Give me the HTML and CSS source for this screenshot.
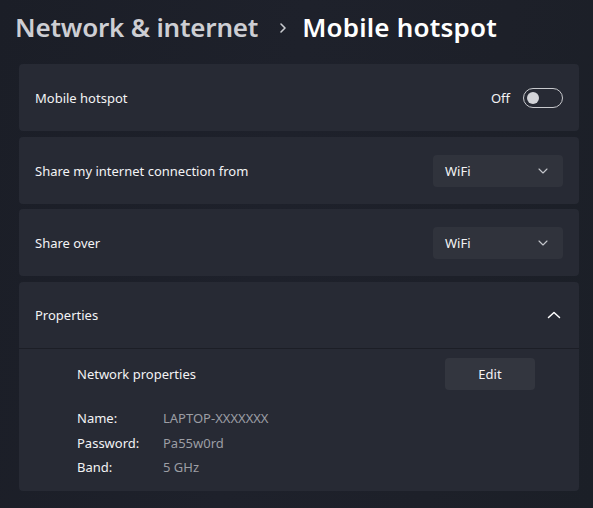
FILE: index.html
```html
<!DOCTYPE html>
<html lang="en">
<head>
<meta charset="utf-8">
<title>Mobile hotspot</title>
<link rel="stylesheet" href="styles.css">
</head>
<body>
<div class="page">
  <h1 class="title">
    <span class="crumb">Network &amp; internet</span>
    <svg class="crumb-sep" width="8" height="12" viewBox="0 0 8 12"><path d="M2 2 L6 6 L2 10" fill="none" stroke="#c9cbd0" stroke-width="1.6" stroke-linecap="round" stroke-linejoin="round"/></svg>
    <span class="current">Mobile hotspot</span>
  </h1>
  <div class="list">
    <div class="card row">
      <span class="label">Mobile hotspot</span>
      <div class="toggle-wrap">
        <span class="state">Off</span>
        <span class="toggle"><span class="knob"></span></span>
      </div>
    </div>
    <div class="card row">
      <span class="label">Share my internet connection from</span>
      <div class="select"><span>WiFi</span>
        <svg width="10" height="6" viewBox="0 0 10 6"><path d="M1 1 L5 5 L9 1" fill="none" stroke="#c4c6cb" stroke-width="1.1" stroke-linecap="round" stroke-linejoin="round"/></svg>
      </div>
    </div>
    <div class="card row">
      <span class="label">Share over</span>
      <div class="select"><span>WiFi</span>
        <svg width="10" height="6" viewBox="0 0 10 6"><path d="M1 1 L5 5 L9 1" fill="none" stroke="#c4c6cb" stroke-width="1.1" stroke-linecap="round" stroke-linejoin="round"/></svg>
      </div>
    </div>
    <div class="card expander">
      <div class="row header">
        <span class="label">Properties</span>
        <svg class="caret" width="14" height="8" viewBox="0 0 14 8"><path d="M1.5 6.5 L7 1.5 L12.5 6.5" fill="none" stroke="#ffffff" stroke-width="1.5" stroke-linecap="round" stroke-linejoin="round"/></svg>
      </div>
      <div class="content">
        <div class="content-top">
          <span class="label">Network properties</span>
          <button class="btn">Edit</button>
        </div>
        <div class="props">
          <span class="k">Name:</span><span class="v">LAPTOP-XXXXXXX</span>
          <span class="k">Password:</span><span class="v">Pa55w0rd</span>
          <span class="k">Band:</span><span class="v">5 GHz</span>
        </div>
      </div>
    </div>
  </div>
</div>
</body>
</html>
```
FILE: styles.css
```css
html, body {
  margin: 0;
  padding: 0;
}
body {
  width: 593px;
  height: 508px;
  overflow: hidden;
  background: linear-gradient(100deg, #1b1e27 0%, #1e212b 45%, #1d2029 75%, #1b1f27 100%);
  font-family: "Noto Sans", "Open Sans", sans-serif;
  color: #ffffff;
}
.page {
  padding: 0 14px 0 19px;
}
.title {
  margin: 0;
  height: 56px;
  display: flex;
  align-items: center;
  margin-left: -4px;
  font-size: 26px;
  font-weight: 600;
  letter-spacing: -0.2px;
  padding-bottom: 2px;
  box-sizing: border-box;
}
.crumb {
  color: #cdced3;
}
.crumb-sep {
  margin: 2px 15px 0 21px;
}
.current {
  color: #ffffff;
  letter-spacing: 0.2px;
}
.list {
  display: flex;
  flex-direction: column;
  gap: 5.6px;
  margin-top: 8px;
}
.card {
  background: #272a34;
  border-radius: 4px;
}
.row {
  height: 67px;
  display: flex;
  align-items: center;
  justify-content: space-between;
  padding: 1px 16px 0;
  box-sizing: border-box;
}
.label {
  font-size: 13px;
  color: #f3f3f5;
}
.toggle-wrap {
  display: flex;
  align-items: center;
  gap: 13px;
}
.state {
  font-size: 13px;
  color: #f3f3f5;
}
.toggle {
  width: 40px;
  height: 20px;
  box-sizing: border-box;
  border: 1px solid #c8c9cd;
  border-radius: 10px;
  display: flex;
  align-items: center;
  padding-left: 3px;
}
.knob {
  width: 12px;
  height: 12px;
  border-radius: 50%;
  background: #d3d4d8;
}
.select {
  width: 130px;
  height: 32px;
  box-sizing: border-box;
  background: #30333c;
  border-radius: 4px;
  display: flex;
  align-items: center;
  justify-content: space-between;
  padding: 0 15px 0 12px;
  font-size: 13px;
  color: #f3f3f5;
}
.expander .header {
  border-bottom: 1px solid #1c1e26;
}
.caret {
  margin-right: 2px;
}
.content {
  padding: 9px 44px 13px 58px;
}
.content-top {
  display: flex;
  align-items: center;
  justify-content: space-between;
  height: 32px;
}
.btn {
  width: 90px;
  height: 32px;
  border: none;
  border-radius: 4px;
  background: #33363f;
  color: #f3f3f5;
  font-family: inherit;
  font-size: 13px;
  padding: 0;
}
.props {
  display: grid;
  grid-template-columns: 86px auto;
  row-gap: 5px;
  margin-top: 19.5px;
  font-size: 13px;
  line-height: 19.5px;
}
.k {
  color: #f3f3f5;
}
.v {
  color: #9c9ea4;
}
```
